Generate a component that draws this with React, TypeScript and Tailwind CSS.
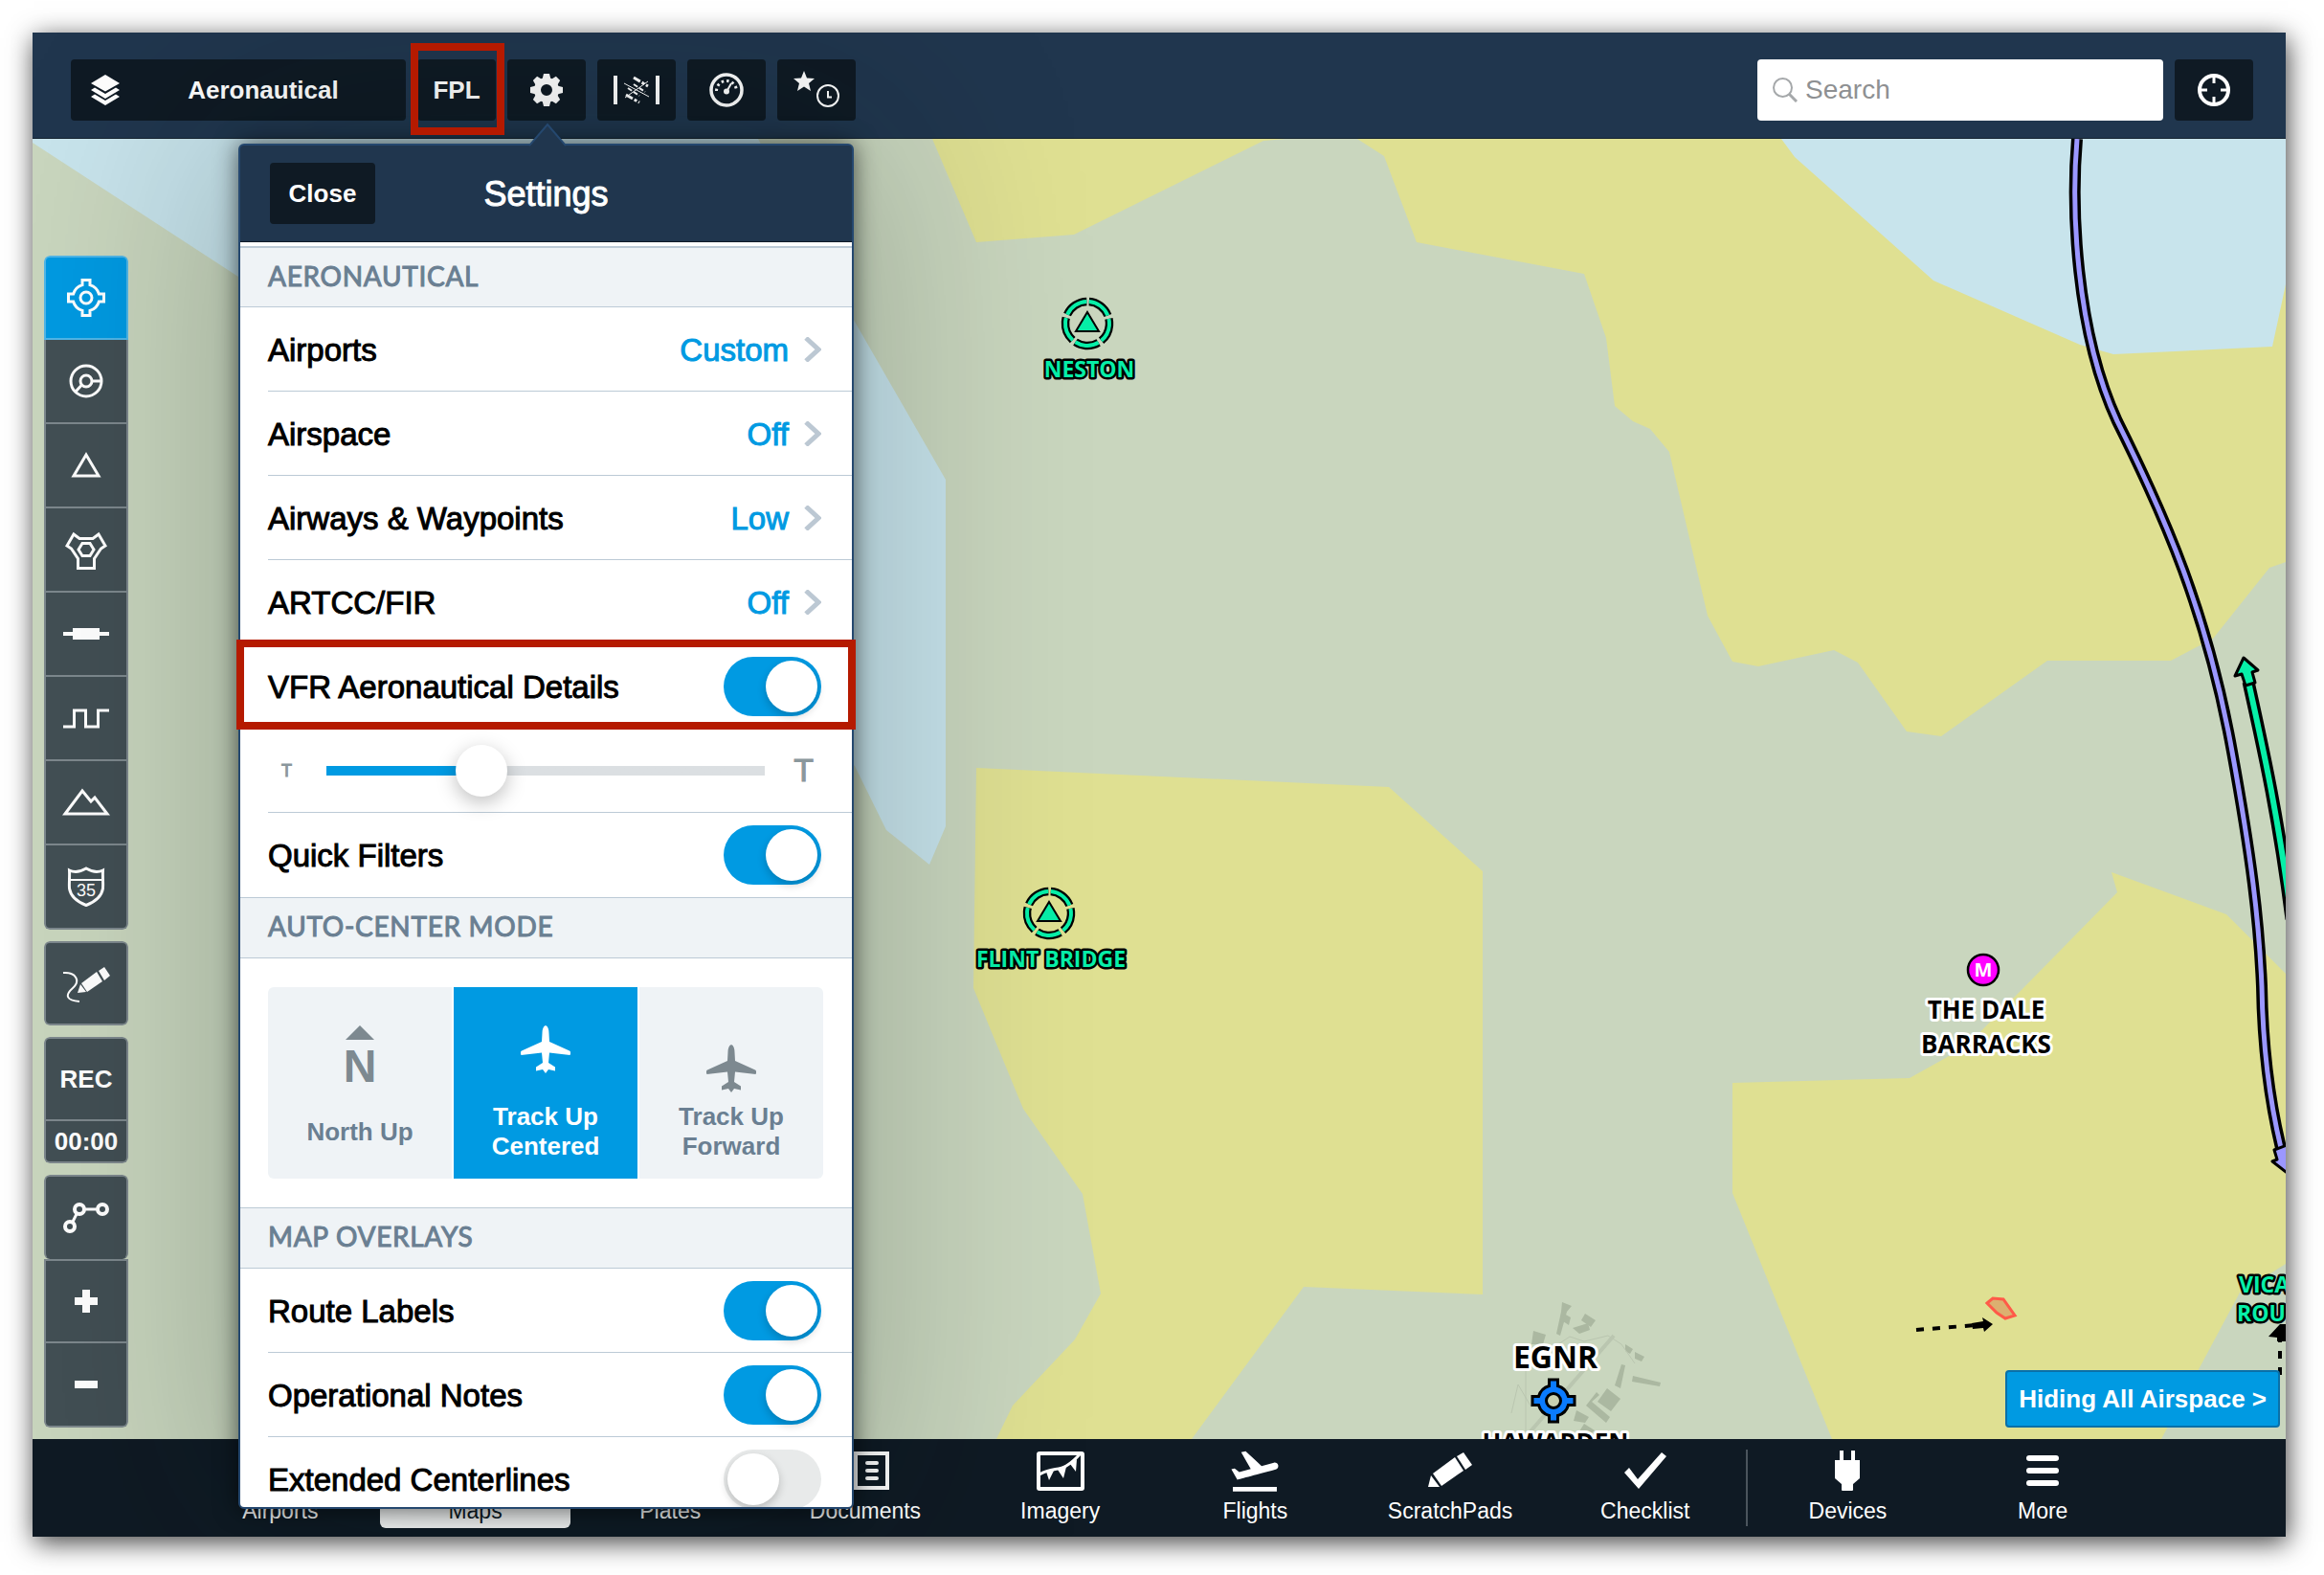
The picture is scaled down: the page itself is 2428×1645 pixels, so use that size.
import { Fragment, useState, type ReactNode } from 'react'
import { FileText, Map as MapIcon, TowerControl } from 'lucide-react'
import { MdFlightTakeoff } from 'react-icons/md'

const AIRPORT_PATH =
	'M-4 -13.4V-18.5H4V-13.4A14 14 0 0 1 13.4 -4H18.5V4H13.4A14 14 0 0 1 4 13.4V18.5H-4V13.4A14 14 0 0 1 -13.4 4H-18.5V-4H-13.4A14 14 0 0 1 -4 -13.4Z'

const AIRWAY_PATH =
	'M2170 145C2164 215 2168 345 2212 440C2262 540 2306 640 2332 785C2352 895 2360 960 2363 1030C2364 1090 2370 1145 2383 1199'

const ROUTE_PATH = 'M2349 712C2364 780 2380 850 2394 960'

function Icon({ children, solid = false }: { children: ReactNode; solid?: boolean }) {
	return (
		<svg
			viewBox="-30 -22 60 44"
			className="h-[44px] w-[60px] shrink-0"
			fill={solid ? 'currentColor' : 'none'}
			stroke={solid ? 'none' : 'currentColor'}
			strokeWidth="3"
			aria-hidden="true"
		>
			{children}
		</svg>
	)
}

const layerTools = [
	{
		name: 'Airports',
		icon: (
			<Icon>
				<path d={AIRPORT_PATH} />
				<circle r="6" />
			</Icon>
		),
	},
	{
		name: 'Obstacles',
		icon: (
			<Icon>
				<circle r="16" />
				<circle r="6" />
				<path d="M6 0H16M-4.500 4L-11 11" />
			</Icon>
		),
	},
	{
		name: 'Waypoints',
		icon: (
			<Icon>
				<path d="M0 -11L13 11H-13Z" />
			</Icon>
		),
	},
	{
		name: 'Navaids',
		icon: (
			<Icon>
				<path d="M-13 -16L-7 -11.500H7L13 -16L20 -4L15.500 -1L8.500 9.500V19.500H-8.500V9.500L-15.500 -1L-20 -4Z" />
				<path d="M-4 -6.500H4L8 0L4 6.500H-4L-8 0Z" />
			</Icon>
		),
	},
	{
		name: 'Airways',
		icon: (
			<Icon>
				<path d="M-24 0H24" strokeWidth="4" />
				<path d="M-14 0H14" strokeWidth="12" />
			</Icon>
		),
	},
	{
		name: 'Airspace',
		icon: (
			<Icon>
				<path d="M-24 9H-12.500V-8H-0.500V9H12.500V-8H24" />
			</Icon>
		),
	},
	{
		name: 'Terrain',
		icon: (
			<Icon>
				<path d="M-22 12L-4 -12L5 -1L9 -5L22 12Z" />
			</Icon>
		),
	},
	{
		name: 'Roads',
		icon: (
			<Icon>
				<path d="M-17.500 -17C-11 -14 -5 -16 0 -19C5 -16 11 -14 17.500 -17C17 -10 18 -4 17.500 2C16 11 9 16 0 19.500C-9 16 -16 11 -17.500 2C-18 -4 -17 -10 -17.500 -17Z" />
				<path d="M-17 -7H17" strokeWidth="2" />
				<text y="10" textAnchor="middle" fontSize="18" fill="currentColor" stroke="none">
					35
				</text>
			</Icon>
		),
	},
]

function PlaneIcon() {
	return (
		<svg viewBox="-26 -25 52 50" className="h-[50px] w-[52px]" fill="currentColor" aria-hidden="true">
			<path d="M0 -25C2.500 -24 3.500 -21 3.500 -17L4 -8L25 1.500Q27 3 25.500 6L4 3.500L3 14L10 18.500V22.500L3 21L0 25L-3 21L-10 22.500V18.500L-3 14L-4 3.500L-25.500 6Q-27 3 -25 1.500L-4 -8L-3.500 -17C-3.500 -21 -2.500 -24 0 -25Z" />
		</svg>
	)
}

function HeaderButton({ label, children }: { label: string; children: ReactNode }) {
	return (
		<button
			type="button"
			aria-label={label}
			className="flex h-16 w-[82px] items-center justify-center rounded bg-[#0f1a24]"
		>
			{children}
		</button>
	)
}

function Header() {
	return (
		<header className="flex h-[111px] shrink-0 items-start border-b border-[#14222f] bg-[#20364e] pt-7 pr-[34px] pl-10 text-white">
			<div className="flex gap-3">
				<button type="button" className="flex h-16 w-[350px] items-center rounded bg-[#0f1a24] pl-5">
					<svg viewBox="0 0 32 32" className="size-8" fill="currentColor" aria-hidden="true">
						<path d="M16 0L31 9L16 17.500L1 9Z" />
						<path d="M1 16L5 13.500L16 20L27 13.500L31 16L16 25Z" />
						<path d="M1 23L5 20.500L16 27L27 20.500L31 23L16 32Z" />
					</svg>
					<span className="flex-1 text-center text-[26px] font-bold">Aeronautical</span>
				</button>
				<div className="relative">
					<button type="button" className="h-16 w-[82px] rounded bg-[#0f1a24] text-[26px] font-bold">
						FPL
					</button>
					<div className="pointer-events-none absolute -top-[17px] -right-[9px] -bottom-[15px] -left-[7px] z-30 border-8 border-[#b51a00]" />
				</div>
				<HeaderButton label="Settings">
					<svg viewBox="-18 -18 36 36" className="size-9" aria-hidden="true">
						<circle r="9.500" fill="none" stroke="currentColor" strokeWidth="7" />
						{[0, 45, 90, 135, 180, 225, 270, 315].map(angle => (
							<path key={angle} d="M-4.500 -11L-3 -17H3L4.500 -11Z" fill="currentColor" transform={`rotate(${angle})`} />
						))}
					</svg>
				</HeaderButton>
				<HeaderButton label="Radar">
					<svg viewBox="-24 -16 48 32" className="h-8 w-12" fill="none" stroke="currentColor" aria-hidden="true">
						<path d="M-22 -15V15M22 -15V15" strokeWidth="4" />
						<path d="M-3 -13L12 -4M-11 5L3 13" strokeWidth="3" strokeDasharray="8 2 3 2" />
						<path d="M-3 -6L9 2M-9 -2L3 6" strokeWidth="2" strokeDasharray="5 2" />
						<path d="M-13 -7L13 7M12 -9L-12 8" strokeWidth="1" />
					</svg>
				</HeaderButton>
				<HeaderButton label="Instruments">
					<svg viewBox="-18 -18 36 36" className="size-9" fill="none" stroke="currentColor" aria-hidden="true">
						<circle r="16" strokeWidth="3.500" />
						<path d="M-10.500 1A10.500 10.500 0 1 1 10.500 1" strokeWidth="3" strokeDasharray="2.500 3" />
						<path d="M0 2L5 -7" strokeWidth="2" />
						<circle cy="1.500" r="3" fill="currentColor" stroke="none" />
					</svg>
				</HeaderButton>
				<HeaderButton label="Recent favorites">
					<svg viewBox="0 0 50 40" className="h-10 w-[50px]" aria-hidden="true">
						<path
							d="M12 0L15 7.500L23 8L17 13L19 21L12 16.500L5 21L7 13L1 8L9 7.500Z"
							fill="currentColor"
						/>
						<g fill="none" stroke="currentColor" strokeWidth="2">
							<circle cx="37" cy="26" r="11" />
							<path d="M37 21V27.500H41" />
						</g>
					</svg>
				</HeaderButton>
			</div>
			<div className="ml-auto flex gap-3">
				<label className="flex h-16 w-[424px] items-center gap-2 rounded bg-white pl-4">
					<svg viewBox="0 0 26 26" className="size-[26px]" fill="none" stroke="#a5a8aa" aria-hidden="true">
						<circle cx="10.500" cy="10.500" r="9.500" strokeWidth="2" />
						<path d="M17 17L25 25" strokeWidth="3" />
					</svg>
					<input
						type="text"
						aria-label="Search"
						placeholder="Search"
						className="min-w-0 flex-1 bg-transparent text-[28px] text-black outline-none placeholder:text-[#8e9092]"
					/>
				</label>
				<HeaderButton label="Center on location">
					<svg viewBox="-18 -18 36 36" className="size-9" fill="none" stroke="currentColor" aria-hidden="true">
						<circle r="15" strokeWidth="4" />
						<path d="M0 -14V-7M0 7V14M-14 0H-7M7 0H14" strokeWidth="3" />
					</svg>
				</HeaderButton>
			</div>
		</header>
	)
}

function Toolbar() {
	const [active, setActive] = useState('Airports')
	const box = 'flex w-[88px] flex-col overflow-hidden rounded-md text-white'
	const cell = 'flex h-[88px] items-center justify-center border-2 border-[#7d888d] bg-[#424f54]'

	return (
		<div className="relative flex h-full w-fit flex-col justify-end gap-3 pb-3 pl-3">
			<div className={box}>
				{layerTools.map(({ name, icon }) => (
					<button
						key={name}
						type="button"
						aria-label={name}
						aria-pressed={active === name}
						onClick={() => setActive(name)}
						className={
							active === name
								? 'flex h-[88px] items-center justify-center border-2 border-[#4fb6e8] bg-[#009ae2] first:rounded-t-md'
								: 'flex h-[88px] items-center justify-center border-x-2 border-b-2 border-[#7d888d] bg-[#424f54] last:rounded-b-md'
						}
					>
						{icon}
					</button>
				))}
			</div>
			<div className={box}>
				<button type="button" aria-label="Annotate" className={`${cell} rounded-md`}>
					<Icon>
						<path d="M-24 -11C-10 -12 -6 -2 -14 5C-23 13 -20 18 -7 19" strokeWidth="2" />
						<g fill="currentColor" stroke="none">
							<path d="M-9 10L-6 1L0 9Z" />
							<path d="M-5 0L11 -12L17 -2L1 9Z" />
							<path d="M13 -13L19 -17L25 -8L19 -3Z" />
						</g>
					</Icon>
				</button>
			</div>
			<div className={box}>
				<button type="button" className={`${cell} rounded-t-md text-[26px] font-bold`}>
					REC
				</button>
				<div className="flex h-11 items-center justify-center rounded-b-md border-x-2 border-b-2 border-[#7d888d] bg-[#424f54] text-[26px] font-bold">
					00:00
				</div>
			</div>
			<div className={box}>
				<button type="button" aria-label="Ruler" className={`${cell} rounded-md border-b-0`}>
					<Icon>
						<path d="M-1 -9H11M-10 -4L-14 4" />
						<g strokeWidth="4">
							<circle cx="-7" cy="-9" r="5" />
							<circle cx="17" cy="-9" r="5" />
							<circle cx="-17" cy="9" r="5" />
						</g>
					</Icon>
				</button>
				<button type="button" aria-label="Zoom in" className={cell}>
					<Icon>
						<path d="M-12 0H12M0 -12V12" strokeWidth="8" />
					</Icon>
				</button>
				<button type="button" aria-label="Zoom out" className={`${cell} rounded-b-md border-t-0`}>
					<Icon>
						<path d="M-12 0H12" strokeWidth="8" />
					</Icon>
				</button>
			</div>
		</div>
	)
}

function ReportingPoint({ x, y, name }: { x: number; y: number; name: string }) {
	return (
		<g transform={`translate(${x} ${y})`}>
			<g fill="none" transform="rotate(-85.500)" strokeDasharray="25.400 3.500">
				<circle r="23" stroke="#000" strokeWidth="8.500" />
				<circle r="23" stroke="#07efa8" strokeWidth="4" />
			</g>
			<path d="M0 -12L12 8H-12Z" fill="#07efa8" stroke="#000" strokeWidth="2" />
			<text
				x="2"
				y="56"
				textAnchor="middle"
				fontSize="23"
				fill="#07efa8"
				stroke="#000"
				strokeWidth="5"
				strokeLinejoin="round"
				paintOrder="stroke"
			>
				{name}
			</text>
		</g>
	)
}

function ChartMap() {
	return (
		<svg
			viewBox="34 145 2354 1358"
			preserveAspectRatio="xMinYMin slice"
			className="absolute inset-0 h-full w-full font-['Open_Sans','Noto_Sans',sans-serif] font-bold"
			role="img"
			aria-label="Aeronautical map"
		>
			<rect x="34" y="145" width="2354" height="1358" fill="#c9d6be" />
			<g fill="#c8e4ec">
				<path d="M34 149V145H792L893 336L988 501V863L971 903L926 867L893 800L249 289Z" />
				<path d="M1850 145H2388V400H2100L1850 180Z" />
			</g>
			<g fill="#dfe092">
				<path d="M974 145L1020 253L1122 245L1320 147L1343 145Z" />
				<path d="M1418 145L1446 163L1480 253L1655 286L1678 353L1687 424L1706 440L1724 448L1744 472L1784 643L1810 691L1837 696L1916 679L1941 692L1992 764L2028 769L2139 690H2268L2312 667L2371 593L2388 587V297L2374 362L2208 370L2173 360L2020 293L1875 164L1861 145Z" />
				<path d="M1020 802L1451 822L1549 910V1352L1362 1344L1245 1503H1041L1058 1468L1123 1399L1150 1351L1131 1247L1069 1158L1017 1032Z" />
				<path d="M1810 1131L1995 1126L2054 1093L2212 932L2206 911L2326 955L2388 1017V1320L2340 1350L2258 1503H1914L1810 1246Z" />
			</g>

			{/* airfield buildings and taxiways */}
			<g fill="#abb8a1">
				<path d="M1632 1360L1642 1364L1637 1370L1630 1395L1626 1393L1631 1370Z" />
				<path d="M1634 1372L1641 1376L1639 1384L1633 1380Z" />
				<path d="M1656 1372L1667 1379L1662 1386L1652 1379Z" />
				<path d="M1643 1387L1659 1382L1661 1389L1650 1393Z" />
				<path d="M1602 1390L1615 1394L1612 1404L1600 1404Z" />
				<path d="M1698 1404L1706 1409L1703 1414L1698 1411Z" />
				<path d="M1708 1412L1718 1417L1715 1422L1708 1419Z" />
				<path d="M1706 1437L1735 1444L1734 1448L1705 1443Z" />
				<path d="M1694 1425L1698 1426L1693 1450L1687 1447Z" />
				<path d="M1679 1450L1693 1461L1683 1474L1669 1464Z" />
				<path d="M1668 1454L1671 1457L1663 1464L1682 1480L1678 1486L1657 1468Z" />
				<path d="M1647 1473L1660 1480L1656 1486L1644 1484Z" />
				<path d="M1655 1487L1666 1494L1660 1499L1650 1495Z" />
			</g>
			<g fill="none" stroke="#bac6b0">
				<path d="M1599 1495L1686 1395" strokeWidth="4" />
				<path d="M1594 1503V1430M1579 1476L1586 1446L1600 1470" />
				<path d="M1628 1404L1640 1396L1655 1401L1680 1395L1694 1404L1708 1424" />
			</g>

			{/* airways */}
			<g fill="none">
				<path d={AIRWAY_PATH} stroke="#000" strokeWidth="12" />
				<path d={AIRWAY_PATH} stroke="#9b97ff" strokeWidth="5" />
				<path d={ROUTE_PATH} stroke="#000" strokeWidth="13" />
				<path d={ROUTE_PATH} stroke="#07efa8" strokeWidth="6" />
			</g>
			<g stroke="#000" strokeWidth="3" strokeLinejoin="round">
				<path d="M2376 1201L2392 1195L2396 1206L2404 1202L2396 1230L2374 1213L2379 1211Z" fill="#9b97ff" />
				<path d="M2344 687L2359 700L2353 702L2356 713L2346 716L2342 704L2335 706Z" fill="#07efa8" />
			</g>

			<ReportingPoint x={1136} y={338} name="NESTON" />
			<ReportingPoint x={1096} y={954} name="FLINT BRIDGE" />

			<circle cx="2072" cy="1013" r="16" fill="#ff00ff" stroke="#000" strokeWidth="2.500" />
			<text x="2072" y="1020" textAnchor="middle" fontSize="20" fill="#fff">
				M
			</text>
			<g textAnchor="middle" stroke="#fff" strokeWidth="6" strokeLinejoin="round" paintOrder="stroke" fontSize="26">
				<text x="2075" y="1064">
					THE DALE
				</text>
				<text x="2075" y="1100">
					BARRACKS
				</text>
				<text x="1625" y="1429" fontSize="32">
					EGNR
				</text>
				<text x="1625" y="1516">
					HAWARDEN
				</text>
			</g>
			<g transform="translate(1623 1463)" stroke="#000" strokeWidth="3">
				<path
					d="M-4.500 -15.500V-22H4.500V-15.500A16 16 0 0 1 15.500 -4.500H22V4.500H15.500A16 16 0 0 1 4.500 15.500V22H-4.500V15.500A16 16 0 0 1 -15.500 4.500H-22V-4.500H-15.500A16 16 0 0 1 -4.500 -15.500Z"
					fill="#0a7bff"
				/>
				<circle r="7.500" fill="#c9d0b0" />
			</g>

			<path d="M2002 1389L2064 1384" stroke="#000" strokeWidth="4" strokeDasharray="8 9" />
			<path d="M2060 1382L2072 1380L2071 1376L2082 1383L2073 1391L2072 1387L2061 1388Z" />
			<path
				d="M2076 1361L2082 1356L2093 1357L2105 1374L2095 1377L2086 1371Z"
				fill="#dcb070"
				stroke="#ff5a48"
				strokeWidth="3"
			/>
			<g fill="#07efa8" stroke="#000" strokeWidth="5" strokeLinejoin="round" paintOrder="stroke" fontSize="23">
				<text x="2339" y="1350">
					VICA
				</text>
				<text x="2337" y="1380">
					ROU
				</text>
			</g>
			<path d="M2382 1383L2370 1396L2379 1397V1401H2388V1383Z" />
			<path d="M2382 1394V1436" stroke="#000" strokeWidth="4" strokeDasharray="8 9" />
		</svg>
	)
}

function SectionTitle({ children }: { children: string }) {
	return (
		<h3 className="flex h-16 items-center border-y border-[#bccad6] bg-[#eff3f6] pb-1 pl-[29px] font-['Lato',sans-serif] text-[28px] tracking-wide text-[#6a7f92] [-webkit-text-stroke:1px] first:border-t-2">
			{children}
		</h3>
	)
}

const rowClass =
	'ml-[29px] flex h-[88px] items-center border-b border-[#bccad6] pr-8 text-[33px] text-black last:border-b-0'

function LinkRow({ label, value }: { label: string; value: string }) {
	return (
		<button type="button" className={`${rowClass} w-[calc(100%-29px)]`}>
			<span className="pt-[2px] [-webkit-text-stroke:1px]">{label}</span>
			<span className="ml-auto pt-[2px] text-[#009ae2] [-webkit-text-stroke:1px]">{value}</span>
			<svg viewBox="0 0 18 26" className="ml-4 h-[26px] w-[18px]" fill="none" stroke="#bcc8d3" aria-hidden="true">
				<path d="M2 1L15 13L2 25" strokeWidth="5" />
			</svg>
		</button>
	)
}

function ToggleRow({ label, on = false }: { label: string; on?: boolean }) {
	const [checked, setChecked] = useState(on)

	return (
		<label className={rowClass}>
			<span className="pt-[2px] [-webkit-text-stroke:1px]">{label}</span>
			<input
				type="checkbox"
				role="switch"
				checked={checked}
				onChange={() => setChecked(!checked)}
				className="ml-auto h-[62px] w-[102px] appearance-none rounded-full bg-[#e8eaea] p-1 before:block before:size-[54px] before:rounded-full before:bg-white before:shadow-[0_4px_10px_rgba(0,0,0,0.2)] checked:bg-[#009ae2] checked:before:ml-10"
			/>
		</label>
	)
}

const modes = [
	{
		label: 'North Up',
		art: (
			<span className="flex flex-col items-center">
				<svg viewBox="0 0 30 15" className="h-[15px] w-[30px]" fill="currentColor" aria-hidden="true">
					<path d="M15 0L30 15H0Z" />
				</svg>
				<span className="text-5xl leading-[56px] font-bold">N</span>
			</span>
		),
	},
	{ label: 'Track Up Centered', art: <PlaneIcon /> },
	{
		label: 'Track Up Forward',
		art: (
			<span className="pt-5">
				<PlaneIcon />
			</span>
		),
	},
]

function CenterModes() {
	const [mode, setMode] = useState('Track Up Centered')

	return (
		<div className="flex gap-[2px] py-[30px] pr-[30px] pl-[29px]">
			{modes.map(({ label, art }) => (
				<button
					key={label}
					type="button"
					aria-pressed={mode === label}
					onClick={() => setMode(label)}
					className={
						mode === label
							? 'flex h-[200px] flex-1 flex-col items-center bg-[#009ae2] pt-10 text-white'
							: 'flex h-[200px] flex-1 flex-col items-center bg-[#eff3f6] pt-10 text-[#7d8990] first:rounded-l-md last:rounded-r-md'
					}
				>
					<span className="flex h-20 items-start">{art}</span>
					<span
						className={
							mode === label
								? 'flex h-[62px] w-32 items-center justify-center text-[26px] leading-[31px] font-bold'
								: 'flex h-[62px] w-32 items-center justify-center text-[26px] leading-[31px] font-bold text-[#6a7f92]'
						}
					>
						{label}
					</span>
				</button>
			))}
		</div>
	)
}

function SettingsPopover() {
	return (
		<section
			aria-label="Settings"
			className="absolute top-[116px] bottom-[29px] left-[215px] z-20 w-[643px] rounded-md border-2 border-[#25486f] bg-[#20364e] shadow-[0_0_220px_30px_rgba(0,20,20,0.22),0_0_24px_rgba(0,0,0,0.6)]"
		>
			<svg viewBox="0 0 38 26" className="absolute -top-6 left-[302px] h-[26px] w-[38px]" aria-hidden="true">
				<path d="M0 24L19 2L38 24V26H0Z" fill="#20364e" />
				<path d="M0 24L19 2L38 24" fill="none" stroke="#25486f" strokeWidth="2" />
			</svg>
			<div className="flex h-full flex-col overflow-hidden rounded-sm">
				<div className="grid h-[101px] shrink-0 grid-cols-[1fr_auto_1fr] items-center border-b border-[#0f1a28] px-[31px] text-white">
					<button type="button" className="h-16 w-[110px] rounded bg-[#0f1a24] text-[26px] font-bold">
						Close
					</button>
					<h2 className="pt-[2px] text-[36px] [-webkit-text-stroke:1px]">Settings</h2>
				</div>
				<div className="min-h-0 flex-1 overflow-hidden bg-white pt-1">
					<SectionTitle>AERONAUTICAL</SectionTitle>
					<div>
						<LinkRow label="Airports" value="Custom" />
						<LinkRow label="Airspace" value="Off" />
						<LinkRow label="Airways &amp; Waypoints" value="Low" />
						<LinkRow label="ARTCC/FIR" value="Off" />
						<ToggleRow label="VFR Aeronautical Details" on />
						<div className="ml-[29px] flex h-[88px] items-center border-b border-[#bccad6] pr-10 pl-[14px] text-[#8a979c] [-webkit-text-stroke:1px]">
							<span className="text-lg">T</span>
							<input
								type="range"
								min="0"
								max="3"
								defaultValue="1"
								aria-label="Text size"
								className="mr-[30px] ml-9 h-[10px] flex-1 appearance-none bg-linear-to-r from-[#009ae2] from-35% to-[#dbdfe2] to-35% [&::-webkit-slider-runnable-track]:h-[10px] [&::-webkit-slider-thumb]:-mt-[22px] [&::-webkit-slider-thumb]:size-[54px] [&::-webkit-slider-thumb]:appearance-none [&::-webkit-slider-thumb]:rounded-full [&::-webkit-slider-thumb]:bg-white [&::-webkit-slider-thumb]:shadow-[0_6px_20px_rgba(0,0,0,0.25)]"
							/>
							<span className="text-[34px]">T</span>
						</div>
						<ToggleRow label="Quick Filters" on />
					</div>
					<SectionTitle>AUTO-CENTER MODE</SectionTitle>
					<CenterModes />
					<SectionTitle>MAP OVERLAYS</SectionTitle>
					<div>
						<ToggleRow label="Route Labels" on />
						<ToggleRow label="Operational Notes" on />
						<ToggleRow label="Extended Centerlines" />
					</div>
				</div>
			</div>
			<div className="pointer-events-none absolute top-[516px] -right-1 -left-1 h-[94px] border-8 border-[#b51a00]" />
		</section>
	)
}

const tabs = [
	{ label: 'Airports', icon: <TowerControl size={40} /> },
	{ label: 'Maps', icon: <MapIcon size={40} />, active: true },
	{ label: 'Plates', icon: <FileText size={40} /> },
	{
		label: 'Documents',
		icon: (
			<Icon>
				<path d="M-19 -18H23V18H-19ZM-10 -18V18M-24 -10H-19M-24 0H-19M-24 10H-19" strokeWidth="4" />
				<path d="M2 -8H12M2 0H12M2 8H12" strokeWidth="4" strokeLinecap="round" />
			</Icon>
		),
	},
	{
		label: 'Imagery',
		icon: (
			<Icon>
				<rect x="-23" y="-18" width="46" height="37" rx="1" strokeWidth="4" />
				<path d="M-22 4C-10 -3 -2 0 6 -5C13 -9 16 -13 21 -18" strokeWidth="3" />
				<path d="M-15 1L-12 10L-7 0ZM-3 -1L3 8L6 -4ZM10 -7L16 1L17 -12Z" fill="currentColor" stroke="none" />
			</Icon>
		),
	},
	{ label: 'Flights', icon: <MdFlightTakeoff size={58} /> },
	{
		label: 'ScratchPads',
		icon: (
			<Icon solid>
				<path d="M-23 17L-20 5L-11 17Z" />
				<path d="M-18 3L5 -14L14 0L-9 16Z" />
				<path d="M7 -15L14 -19L23 -6L16 -1Z" />
			</Icon>
		),
	},
	{
		label: 'Checklist',
		icon: (
			<Icon solid>
				<path d="M-22 2L-17 -3L-8 9L17 -19L22 -15L-7 19Z" />
			</Icon>
		),
	},
	{
		label: 'Devices',
		icon: (
			<Icon solid>
				<path d="M-8 -21H-4V-11H4V-21H8V-11H13V8L6 14V20Q6 21 5 21H-5Q-6 21 -6 20V14L-13 8V-11H-8Z" />
			</Icon>
		),
	},
	{
		label: 'More',
		icon: (
			<Icon>
				<path d="M-14 -13H14M-14 0H14M-14 13H14" strokeWidth="6" strokeLinecap="round" />
			</Icon>
		),
	},
]

function TabBar() {
	return (
		<nav className="flex h-[102px] shrink-0 items-center bg-[#0f1a24] pr-[152px] pl-[157px] text-white">
			{tabs.map(({ label, icon, active }) => (
				<Fragment key={label}>
					{label === 'Devices' && <div className="mx-[3px] h-20 w-[2px] bg-[#4a545d]" />}
					<div className="min-w-0 flex-1 px-[2px]">
						<a
							href={`#${label.toLowerCase()}`}
							className={
								active
									? 'flex h-[84px] flex-col items-center rounded-md bg-white pt-[2px] text-[#0f1a24]'
									: 'flex h-[84px] flex-col items-center pt-[2px]'
							}
						>
							<span className="flex h-11 items-center">{icon}</span>
							<span className="mt-[6px] text-[23px] leading-7">{label}</span>
						</a>
					</div>
				</Fragment>
			))}
		</nav>
	)
}

export default function App() {
	return (
		<div className="flex h-screen flex-col bg-white pt-[34px] pr-10 pb-10 pl-[34px] font-['Liberation_Sans',Arial,sans-serif]">
			<div className="relative flex flex-1 flex-col overflow-hidden shadow-[2px_6px_26px_rgba(0,0,0,0.75)]">
				<Header />
				<main className="relative flex-1 overflow-hidden">
					<ChartMap />
					<Toolbar />
					<button
						type="button"
						className="absolute right-[6px] bottom-3 h-[60px] rounded-sm border-2 border-[#0a70a8] bg-[#009ae2] px-3 text-[26px] font-bold text-white"
					>
						Hiding All Airspace &gt;
					</button>
				</main>
				<TabBar />
				<SettingsPopover />
			</div>
		</div>
	)
}
